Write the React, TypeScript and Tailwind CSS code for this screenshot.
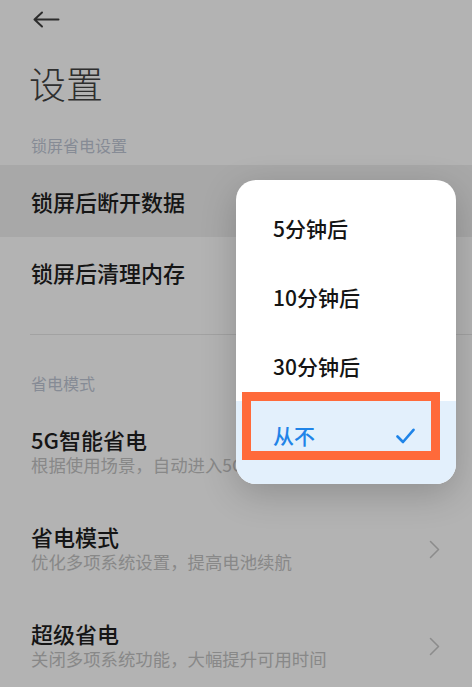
import React from "react";

const font = { fontFamily: '"Noto Sans CJK SC", "Noto Sans", sans-serif' };

function Chevron() {
  return (
    <svg width="11" height="19" viewBox="0 0 11 19" fill="none">
      <path d="M1.5 1.5 L9.5 9.5 L1.5 17.5" stroke="#8c8c8c" strokeWidth="1.6" strokeLinecap="round" strokeLinejoin="round" />
    </svg>
  );
}

function Item({ title, sub, chevron }: { title: string; sub: string; chevron?: boolean }) {
  return (
    <div className="h-[97px] flex items-center pl-[31px] pr-[32px]">
      <div className="flex-1 flex flex-col min-w-0">
        <div className="text-[22px] leading-[28px] font-medium text-[#151515] whitespace-nowrap">{title}</div>
        <div className="text-[17.4px] leading-[24px] text-[#888888] whitespace-nowrap">{sub}</div>
      </div>
      {chevron && (
        <div className="pt-[4px]">
          <Chevron />
        </div>
      )}
    </div>
  );
}

export default function App() {
  return (
    <div className="relative w-full h-[687px] bg-[#b3b3b3] overflow-hidden" style={font}>
      {/* Header */}
      <div className="h-[38px] flex items-center pl-[33px] pt-[1px]">
        <svg width="27" height="17" viewBox="0 0 27 17" fill="none">
          <path d="M1.5 8.5 H25.5 M9 1.5 L1.5 8.5 L9 15.5" stroke="#2c2c2c" strokeWidth="2" strokeLinecap="round" strokeLinejoin="round" />
        </svg>
      </div>
      <div className="h-[90px] flex items-center pl-[29px]">
        <div className="text-[37px] leading-[44px] font-light text-[#2e2e2e]">设置</div>
      </div>
      <div className="h-[37px] pl-[31px] pt-[7px] text-[16px] leading-[20px] text-[#868b95]">锁屏省电设置</div>

      <div className="h-[72px] bg-[#a8a8a8] flex items-center pl-[31px]">
        <div className="text-[22px] leading-[28px] font-medium text-[#151515]">锁屏后断开数据</div>
      </div>
      <div className="h-[70px] flex items-center pl-[31px]">
        <div className="text-[22px] leading-[28px] font-medium text-[#151515]">锁屏后清理内存</div>
      </div>

      <div className="pt-[27px] pl-[30px]">
        <div className="h-px bg-[#a2a2a2]" />
      </div>
      <div className="h-[67px] pl-[31px] pt-[38px] text-[16px] leading-[20px] text-[#868b95]">省电模式</div>

      <Item title="5G智能省电" sub="根据使用场景，自动进入5G节能状态" />
      <Item title="省电模式" sub="优化多项系统设置，提高电池续航" chevron />
      <Item title="超级省电" sub="关闭多项系统功能，大幅提升可用时间" chevron />

      {/* Popup menu */}
      <div className="absolute left-[236px] top-[180px] w-[220px] h-[304px] bg-white rounded-[20px] overflow-hidden shadow-[0_10px_36px_rgba(0,0,0,0.2)] flex flex-col pt-[14px]">
        <div className="h-[69px] flex items-center pl-[37px] text-[21px] font-medium text-[#141414]">5分钟后</div>
        <div className="h-[69px] flex items-center pl-[37px] text-[21px] font-medium text-[#141414]">10分钟后</div>
        <div className="h-[69px] flex items-center pl-[37px] text-[21px] font-medium text-[#141414]">30分钟后</div>
        <div className="flex-1 bg-[#e3f0fc] flex flex-col">
          <div className="h-[70px] flex items-center pl-[37px] pr-[41px]">
            <div className="flex-1 text-[21px] font-medium text-[#1f84e8]">从不</div>
            <svg width="19" height="16" viewBox="0 0 19 16" fill="none">
              <path d="M1.5 8.5 L7 14 L17.5 1.8" stroke="#1f84e8" strokeWidth="2.6" strokeLinecap="round" strokeLinejoin="round" />
            </svg>
          </div>
        </div>
      </div>

      {/* Annotation box */}
      <div className="absolute left-[242px] top-[392px] w-[198px] h-[68px] border-[9px] border-[#ff6a3a]" />
    </div>
  );
}
